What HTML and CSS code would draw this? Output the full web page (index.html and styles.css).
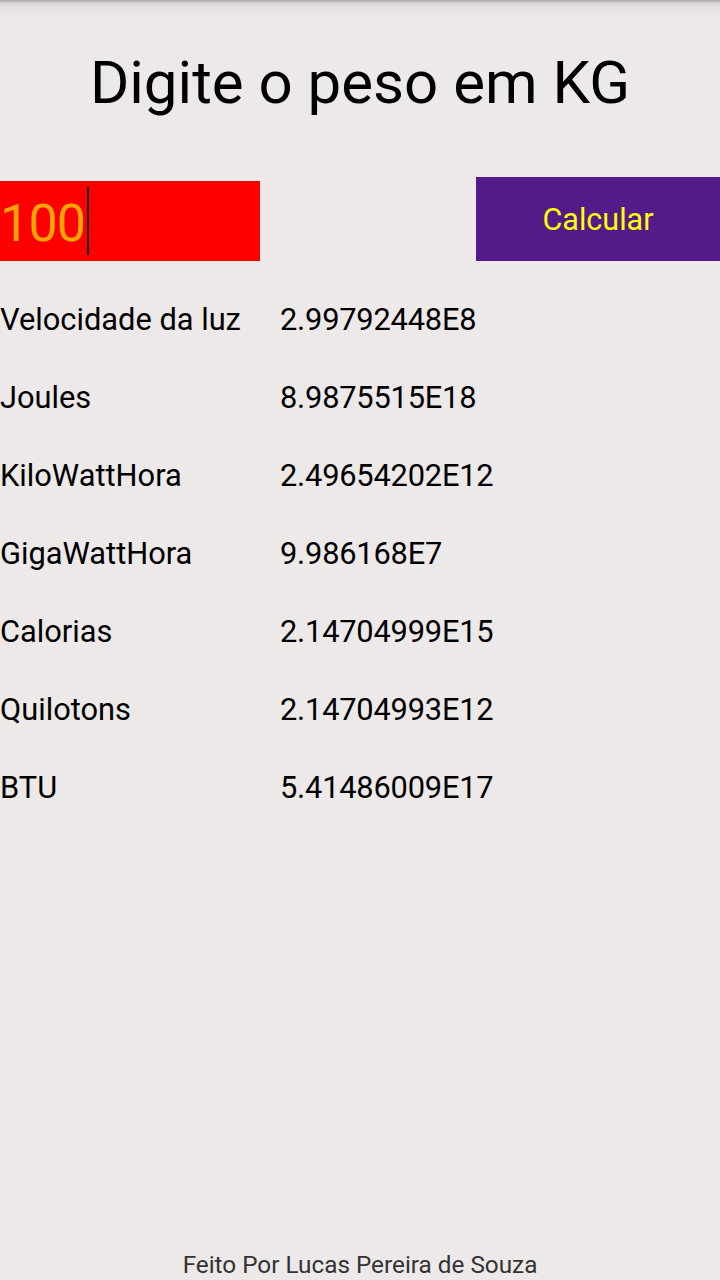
FILE: index.html
```html
<!DOCTYPE html>
<html lang="pt">
<head>
<meta charset="utf-8">
<title>Peso</title>
<link rel="stylesheet" href="styles.css">
</head>
<body>
<div class="screen">
  <h1 class="title">Digite o peso em KG</h1>
  <div class="input-row">
    <div class="field"><span class="value">100</span><span class="caret"></span></div>
    <div class="button">Calcular</div>
  </div>
  <div class="results">
    <div class="label">Velocidade da luz</div><div class="num">2.99792448E8</div>
    <div class="label">Joules</div><div class="num">8.9875515E18</div>
    <div class="label">KiloWattHora</div><div class="num">2.49654202E12</div>
    <div class="label">GigaWattHora</div><div class="num">9.986168E7</div>
    <div class="label">Calorias</div><div class="num">2.14704999E15</div>
    <div class="label">Quilotons</div><div class="num">2.14704993E12</div>
    <div class="label">BTU</div><div class="num">5.41486009E17</div>
  </div>
  <div class="footer">Feito Por Lucas Pereira de Souza</div>
</div>
</body>
</html>
```
FILE: styles.css
```css
html, body {
  margin: 0;
  padding: 0;
  height: 1280px;
  overflow: hidden;
}
body {
  background: #ece9e8;
  font-family: Roboto, "Noto Sans", sans-serif;
  color: #000;
}
.screen {
  height: 1280px;
  display: flex;
  flex-direction: column;
  background: linear-gradient(to bottom, #a9a6a5 0px, #d6d3d2 3px, #e6e2e1 8px, rgba(236,233,232,0) 20px);
}
.title {
  margin: 48px 0 0 0;
  font-size: 60px;
  font-weight: 400;
  line-height: 70px;
  text-align: center;
}
.input-row {
  margin-top: 59px;
  display: flex;
  justify-content: space-between;
  align-items: flex-end;
}
.field {
  width: 260px;
  height: 80px;
  background: #ff0000;
  display: flex;
  align-items: center;
}
.value {
  color: #ffa500;
  font-size: 52px;
  line-height: 80px;
  letter-spacing: -0.8px;
  padding-top: 5px;
}
.caret {
  width: 2px;
  height: 68px;
  background: #111;
  margin-left: 2px;
}
.button {
  width: 244px;
  height: 84px;
  background: #541a8a;
  color: #ffff00;
  font-size: 30.5px;
  display: flex;
  align-items: center;
  justify-content: center;
}
.results {
  margin-top: 20px;
  display: grid;
  grid-template-columns: 280px auto;
  grid-auto-rows: 78px;
  font-size: 30.8px;
  line-height: 78px;
}
.label, .num {
  white-space: nowrap;
}
.num {
  letter-spacing: -0.2px;
}
.footer {
  margin-top: auto;
  margin-bottom: 2px;
  font-size: 24.3px;
  line-height: 26px;
  text-align: center;
  color: #333;
}
```
